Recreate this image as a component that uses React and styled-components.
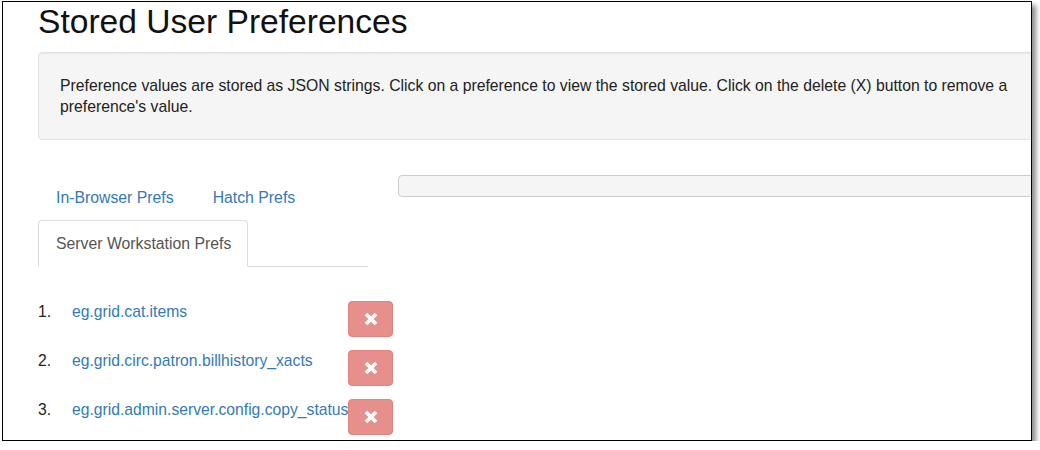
import React from 'react'
import styled, { createGlobalStyle } from 'styled-components'

const GlobalStyle = createGlobalStyle`
  html, body {
    margin: 0;
    padding: 0;
    background: #fff;
  }
  body {
    font-family: "Liberation Sans", Arial, sans-serif;
    color: #333;
  }
  * {
    box-sizing: border-box;
  }
`

const Frame = styled.div`
  margin: 1px 0 0 2px;
  width: 1030px;
  height: 440px;
  border: 1px solid #000;
  background: #fff;
  box-shadow: 4px 4px 5px rgba(0, 0, 0, 0.45);
  overflow: hidden;
`

const Page = styled.div`
  padding-left: 35px;
  width: 1085px;
`

const Title = styled.h1`
  margin: 1px 0 0;
  font-size: 33.6px;
  line-height: 38px;
  font-weight: 400;
  color: #111;
`

const Well = styled.div`
  margin-top: 11px;
  padding: 21.5px 21px;
  background: #f5f5f5;
  border: 1px solid #e3e3e3;
  border-radius: 4px;
  box-shadow: inset 0 1px 1px rgba(0, 0, 0, 0.05);
  font-size: 15.75px;
  line-height: 21.5px;
  color: #222;
`

const Row = styled.div`
  display: flex;
  gap: 30px;
  margin-top: 34px;
`

const LeftCol = styled.div`
  width: 330px;
  flex: none;
`

const RightCol = styled.div`
  width: 690px;
  flex: none;
`

const Tabs = styled.ul`
  display: flex;
  flex-wrap: wrap;
  list-style: none;
  margin: 0;
  padding: 0;
  border-bottom: 1px solid #ddd;
`

const TabItem = styled.li`
  margin: 0 4px -1px 0;
`

const TabLink = styled.a`
  display: block;
  padding: 11px 16px 11px 17px;
  font-size: 15.8px;
  line-height: 23px;
  border: 1px solid ${p => (p.$active ? '#ddd' : 'transparent')};
  border-bottom-color: transparent;
  border-radius: 4px 4px 0 0;
  background: #fff;
  color: ${p => (p.$active ? '#555' : '#337ab7')};
  text-decoration: none;
  cursor: pointer;
`

const PrefList = styled.ol`
  list-style: none;
  margin: 33px 0 0;
  padding: 0;
`

const PrefItem = styled.li`
  display: flex;
  align-items: flex-start;
  margin-bottom: 12px;
  font-size: 15.7px;
  line-height: 23px;
`

const Num = styled.span`
  width: 34px;
  flex: none;
  color: #222;
`

const PrefName = styled.a`
  width: 276px;
  flex: none;
  white-space: nowrap;
  color: #337ab7;
  cursor: pointer;
`

const DeleteButton = styled.button`
  flex: none;
  width: 45px;
  height: 36px;
  margin-top: 1px;
  padding: 0;
  display: flex;
  align-items: center;
  justify-content: center;
  background: #e68f8d;
  border: 1px solid #e3827f;
  border-radius: 4px;
  cursor: pointer;
`

const ValueBox = styled.pre`
  margin: 1px 0 0;
  height: 22px;
  background: #f5f5f5;
  border: 1px solid #ccc;
  border-radius: 4px;
`

const RemoveIcon = () => (
  <svg width="14" height="14" viewBox="0 0 14 14">
    <path d="M2 2 L12 12 M12 2 L2 12" stroke="#fff" strokeWidth="3.8" fill="none" />
  </svg>
)

const prefs = [
  'eg.grid.cat.items',
  'eg.grid.circ.patron.billhistory_xacts',
  'eg.grid.admin.server.config.copy_status'
]

const App = () => (
  <Frame>
    <GlobalStyle />
    <Page>
      <Title>Stored User Preferences</Title>
      <Well>
        Preference values are stored as JSON strings. Click on a preference to view the stored value. Click on the delete (X) button to remove a preference's value.
      </Well>
      <Row>
        <LeftCol>
          <Tabs>
            <TabItem><TabLink>In-Browser Prefs</TabLink></TabItem>
            <TabItem><TabLink>Hatch Prefs</TabLink></TabItem>
            <TabItem><TabLink $active>Server Workstation Prefs</TabLink></TabItem>
          </Tabs>
          <PrefList>
            {prefs.map((name, i) => (
              <PrefItem key={name}>
                <Num>{i + 1}.</Num>
                <PrefName>{name}</PrefName>
                <DeleteButton aria-label="delete"><RemoveIcon /></DeleteButton>
              </PrefItem>
            ))}
          </PrefList>
        </LeftCol>
        <RightCol>
          <ValueBox />
        </RightCol>
      </Row>
    </Page>
  </Frame>
)

export default App
